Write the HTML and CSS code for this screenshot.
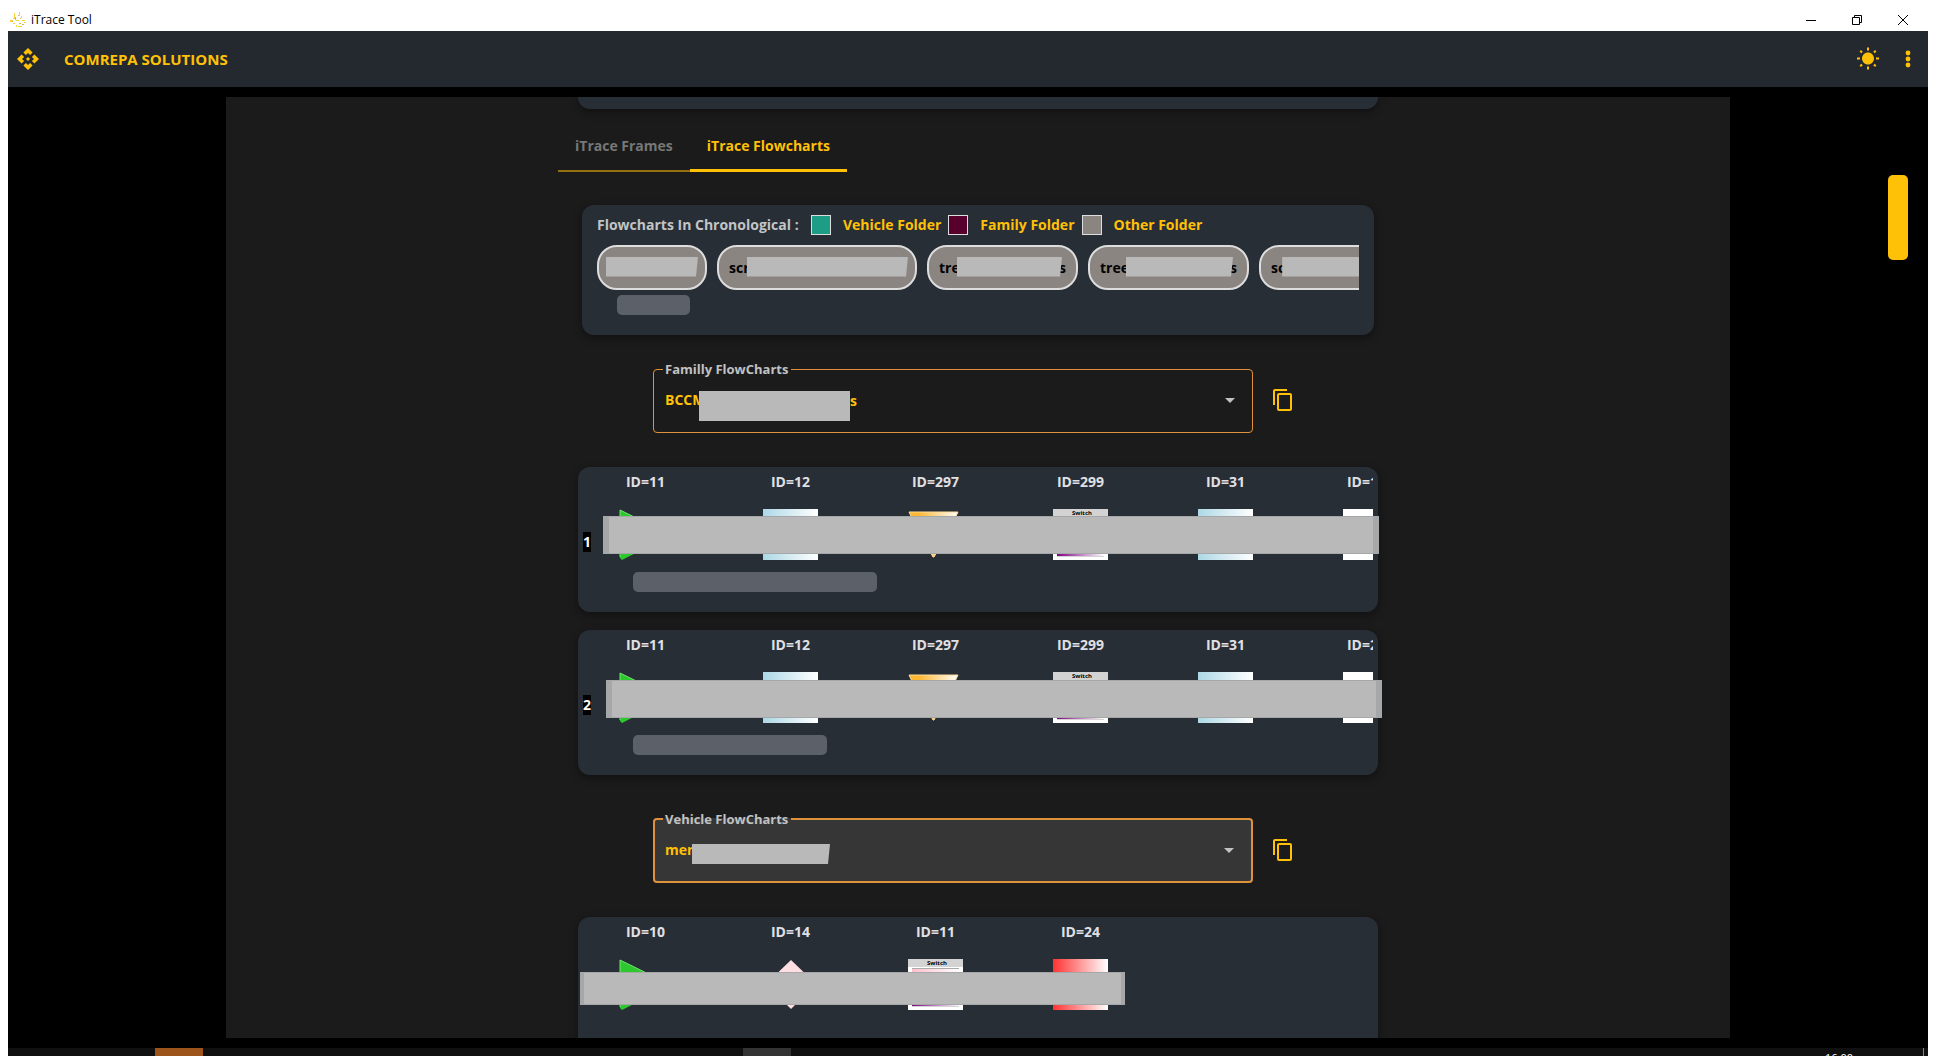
FILE: index.html
```html
<!DOCTYPE html>
<html lang="en">
<head>
<meta charset="utf-8">
<title>iTrace Tool</title>
<link rel="stylesheet" href="styles.css">
</head>
<body>
<svg class="defs" aria-hidden="true">
  <defs>
    <linearGradient id="g-blue"><stop offset="0" stop-color="#add8e6"/><stop offset="1" stop-color="#fff"/></linearGradient>
    <linearGradient id="g-red"><stop offset="0" stop-color="#ff3333"/><stop offset="1" stop-color="#fff"/></linearGradient>
    <linearGradient id="g-orange"><stop offset="0.2" stop-color="#ffb732"/><stop offset="1" stop-color="#fff"/></linearGradient>
    <linearGradient id="g-pink"><stop offset="0" stop-color="#ffc0cb"/><stop offset="1" stop-color="#fff"/></linearGradient>
    <linearGradient id="g-purple"><stop offset="0" stop-color="#800080"/><stop offset="1" stop-color="#fff"/></linearGradient>
    <symbol id="start" viewBox="0 0 55 51"><path d="M2 1 53 26 4 51 2 49Z" fill="#2dc82d"/><path d="M2 48V1L53 26" fill="none" stroke="#6fe86f"/></symbol>
    <symbol id="step" viewBox="0 0 55 51"><path d="M0 0h55v51H0z" fill="url(#g-blue)"/></symbol>
    <symbol id="end" viewBox="0 0 55 51"><path d="M0 0h55v51H0z" fill="url(#g-red)"/></symbol>
    <symbol id="blank" viewBox="0 0 55 51"><path d="M0 0h55v51H0z" fill="#fff"/></symbol>
    <symbol id="prep" viewBox="0 0 55 51"><path d="M1 3h49L41 22 26 48h-1L10 22Z" fill="url(#g-orange)" stroke="#ffdb9a"/></symbol>
    <symbol id="decision" viewBox="0 0 55 51"><path d="M28 1 53 25 28 50 3 25Z" fill="#ffdfe4"/></symbol>
    <symbol id="switch" viewBox="0 0 55 51"><path d="M0 0h55v51H0z" fill="#fff"/><path d="M0 0h55v8H0z" fill="#d3d3d3"/><path d="M4 9h47v1H4z" fill="#aaa"/><path d="M4 10h47v12H4z" fill="url(#g-pink)"/><path d="M4 34h47v13H4z" fill="url(#g-purple)"/><path d="M4 47h47v1H4z" fill="#d3d3d3"/><text x="29" y="6" text-anchor="middle" class="switch-text">Switch</text></symbol>
    <symbol id="copy" viewBox="0 0 24 24"><path d="M16 1H4c-1.1 0-2 .9-2 2v14h2V3h12V1zm3 4H8c-1.1 0-2 .9-2 2v14c0 1.1.9 2 2 2h11c1.1 0 2-.9 2-2V7c0-1.1-.9-2-2-2zm0 16H8V7h11v14z" fill="currentColor"/></symbol>
  </defs>
</svg>
<div class="window">
  <div class="titlebar">
    <svg class="app-icon" viewBox="0 0 16 16"><g fill="#f2d43c"><path d="M4 1h1v5H4zM9 0h1v4H9zM0 8h3v2H0zM3 6h2v1H3zM6 8h3v1H6zM11 4h1v2h-1zM12 8h3v1h-3zM14 10h2v1h-2zM6 13h1v2H6zM8 14h4v1H8zM3 11h2v1H3z"/></g><g fill="#e2b04a"><path d="M5 5h1v3H5zM10 6h1v1h-1zM9 11h2v1H9zM12 12h2v1h-2zM2 9h1v1H2zM8 3h1v1H8z"/></g></svg>
    <span class="window-title">iTrace Tool</span>
    <div class="window-buttons">
      <button aria-label="Minimize"><svg viewBox="0 0 10 10"><path d="M0 5.5h10"/></svg></button>
      <button aria-label="Restore"><svg viewBox="0 0 10 10"><path d="M.5 2.500h7v7h-7zM2.500 2V.5h7v7H8"/></svg></button>
      <button aria-label="Close"><svg viewBox="0 0 10 10"><path d="M0 0l10 10M10 0L0 10"/></svg></button>
    </div>
  </div>
  <header class="appbar">
    <svg class="icon" viewBox="0 0 24 24"><path fill="currentColor" d="M14 12l-2 2-2-2 2-2 2 2zm-2-6l2.120 2.120 2.500-2.500L12 1 7.380 5.620l2.500 2.500L12 6zm-6 6l2.120-2.120-2.500-2.500L1 12l4.620 4.620 2.500-2.500L6 12zm12 0l-2.120 2.120 2.500 2.500L23 12l-4.620-4.620-2.500 2.500L18 12zm-6 6l-2.120-2.120-2.500 2.500L12 23l4.620-4.620-2.500-2.500L12 18z"/></svg>
    <h1>COMREPA SOLUTIONS</h1>
    <button class="icon-button" aria-label="Toggle theme"><svg class="icon" viewBox="0 0 24 24"><path fill="currentColor" d="m6.760 4.840-1.800-1.790-1.410 1.410 1.790 1.790 1.420-1.410zM4 10.500H1v2h3v-2zm9-9.950h-2V3.500h2V.55zm7.450 3.910-1.410-1.410-1.790 1.790 1.410 1.410 1.790-1.790zm-3.210 13.700 1.790 1.800 1.410-1.410-1.800-1.790-1.400 1.400zM20 10.500v2h3v-2h-3zm-8-5c-3.310 0-6 2.690-6 6s2.690 6 6 6 6-2.690 6-6-2.690-6-6-6zm-1 16.950h2V19.500h-2v2.950zm-7.450-3.910 1.410 1.410 1.790-1.800-1.410-1.410-1.790 1.800z"/></svg></button>
    <button class="icon-button" aria-label="More"><svg class="icon" viewBox="0 0 24 24"><g fill="currentColor"><circle cx="12" cy="6" r="2.400"/><circle cx="12" cy="12" r="2.400"/><circle cx="12" cy="18" r="2.400"/></g></svg></button>
  </header>
  <div class="stage">
    <main class="panel">
      <div class="card card-tail"></div>
      <nav class="tabs" role="tablist">
        <button class="tab" role="tab">iTrace Frames</button>
        <button class="tab active" role="tab" aria-selected="true">iTrace Flowcharts</button>
      </nav>
      <section class="card timeline">
        <div class="key">
          <span class="key-title">Flowcharts In Chronological :</span>
          <span class="swatch vehicle"></span><span class="key-name">Vehicle Folder</span>
          <span class="swatch family"></span><span class="key-name">Family Folder</span>
          <span class="swatch other"></span><span class="key-name">Other Folder</span>
        </div>
        <div class="chips">
          <button class="chip" style="width:110px" aria-label="Flowchart 1"><span class="mask"></span></button>
          <button class="chip" style="width:200px">scr<span class="mask"></span></button>
          <button class="chip" style="width:151px">tre<span class="mask"></span>s</button>
          <button class="chip" style="width:161px">tree<span class="mask"></span>s</button>
          <button class="chip" style="width:150px">sc<span class="mask"></span></button>
        </div>
        <div class="thumb" style="width:73px"></div>
      </section>

      <div class="picker">
        <fieldset>
          <legend><label for="family">Familly FlowCharts</label></legend>
          <select id="family"><option>BCCM</option></select>
          <span class="cover cover-family"></span><span class="cover-end">s</span>
        </fieldset>
        <button class="icon-button" aria-label="Copy"><svg class="icon"><use href="#copy"/></svg></button>
      </div>

      <section class="lanes">
        <article class="card lane">
          <div class="steps">
            <div class="node">ID=11<svg><use href="#start"/></svg></div>
            <div class="node">ID=12<svg><use href="#step"/></svg></div>
            <div class="node">ID=297<svg><use href="#prep"/></svg></div>
            <div class="node">ID=299<svg><use href="#switch"/></svg></div>
            <div class="node">ID=31<svg><use href="#step"/></svg></div>
            <div class="node">ID=100<svg><use href="#blank"/></svg></div>
          </div>
          <span class="number">1</span>
          <div class="bar bar-first"></div>
          <div class="thumb" style="width:244px"></div>
        </article>
        <article class="card lane">
          <div class="steps">
            <div class="node">ID=11<svg><use href="#start"/></svg></div>
            <div class="node">ID=12<svg><use href="#step"/></svg></div>
            <div class="node">ID=297<svg><use href="#prep"/></svg></div>
            <div class="node">ID=299<svg><use href="#switch"/></svg></div>
            <div class="node">ID=31<svg><use href="#step"/></svg></div>
            <div class="node">ID=200<svg><use href="#blank"/></svg></div>
          </div>
          <span class="number">2</span>
          <div class="bar bar-second"></div>
          <div class="thumb" style="width:194px"></div>
        </article>
      </section>

      <div class="picker focused">
        <fieldset>
          <legend><label for="vehicle">Vehicle FlowCharts</label></legend>
          <select id="vehicle"><option>men</option></select>
          <span class="cover cover-vehicle"></span>
        </fieldset>
        <button class="icon-button" aria-label="Copy"><svg class="icon"><use href="#copy"/></svg></button>
      </div>

      <section class="lanes">
        <article class="card lane">
          <div class="steps">
            <div class="node">ID=10<svg><use href="#start"/></svg></div>
            <div class="node">ID=14<svg><use href="#decision"/></svg></div>
            <div class="node">ID=11<svg><use href="#switch"/></svg></div>
            <div class="node">ID=24<svg><use href="#end"/></svg></div>
          </div>
          <div class="bar bar-third"></div>
        </article>
      </section>
    </main>
    <div class="page-thumb"></div>
  </div>
  <footer class="taskbar">
    <span class="task running"></span>
    <span class="task current"></span>
    <span class="clock">16:00</span>
  </footer>
</div>
</body>
</html>
```
FILE: styles.css
```css
* { box-sizing: border-box; }

body {
  margin: 0;
  background: #fff;
  font-family: "Open Sans", "Noto Sans", sans-serif;
  font-size: 14px;
  font-weight: 700;
  line-height: 20px;
}

button {
  border: 0;
  padding: 0;
  background: none;
  color: inherit;
  font: inherit;
}

.defs { position: absolute; width: 0; height: 0; }

.switch-text { font: 700 6px "Open Sans", sans-serif; fill: #000; }

.window {
  display: flex;
  flex-direction: column;
  height: 100vh;
  padding: 0 8px;
  overflow: hidden;
}

.titlebar {
  display: flex;
  align-items: center;
  height: 31px;
  flex: none;
  padding: 8px 0 0 2px;
  color: #000;
  font-size: 12px;
  font-weight: 400;
}
.app-icon { width: 16px; height: 16px; margin-right: 5px; }
.window-buttons { display: flex; margin-left: auto; }
.window-buttons button { width: 45px; height: 20px; margin-right: 1px; }
.window-buttons button:last-child { margin-right: 3px; }
.window-buttons svg {
  display: block;
  width: 10px;
  height: 10px;
  margin: auto;
  fill: none;
  stroke: #000;
}

.appbar {
  display: flex;
  align-items: center;
  flex: none;
  height: 56px;
  padding: 0 8px;
  background: #24292f;
  color: #ffc107;
}
.appbar h1 { flex: 1; margin: 0 0 0 24px; font-size: 15px; line-height: 24px; }
.icon { display: block; width: 24px; height: 24px; margin: auto; }
.icon-button { width: 40px; height: 40px; flex: none; color: #ffc107; }
.appbar .icon-button:last-child { margin-right: -8px; }

.stage {
  display: grid;
  grid-template-columns: 218px minmax(0, 1fr) 198px;
  flex: 1;
  min-height: 0;
  padding: 10px 0;
  background: #000;
}
.panel {
  grid-column: 2;
  overflow: hidden;
  background: #1b1b1b;
}
.page-thumb {
  justify-self: end;
  width: 20px;
  height: 85px;
  margin: 78px 20px 0 0;
  border-radius: 5px;
  background: #ffc107;
}

.card {
  width: 800px;
  margin: 0 auto;
  border-radius: 12px;
  background: #282e36;
  box-shadow: 0 3px 8px rgba(0, 0, 0, .4);
}
.card-tail { height: 12px; border-radius: 0 0 12px 12px; }

.tabs { display: flex; width: 840px; margin: 15px auto 33px; }
.tab {
  height: 48px;
  padding: 0 17px 2px;
  border-bottom: 2px solid #93700d;
  color: #777;
}
.tab.active { border-bottom: 3px solid #ffc107; color: #ffc107; }

.timeline {
  width: 792px;
  height: 130px;
  margin-bottom: 26px;
  padding: 10px 15px;
}
.key { display: flex; align-items: center; }
.key-title { width: 214px; color: #c2c4c6; }
.key-name { margin: 0 7px 0 12px; color: #ffc107; }
.swatch { width: 20px; height: 20px; border: 1px solid #ddd; }
.vehicle { background: #1d9c86; }
.family { background: #57002d; }
.other { background: #8b8582; }

.chips { display: flex; gap: 10px; margin: 10px 0 5px; overflow: hidden; }
.chip {
  display: flex;
  align-items: center;
  flex: none;
  height: 45px;
  padding: 0 10px;
  border: 2px solid #ddd;
  border-radius: 20px;
  background: #8b8582;
  color: #000;
}
.mask {
  flex: 1;
  height: 20px;
  margin: 0 -3px 2px;
  background: #b9b9b9;
  clip-path: polygon(0 0, 100% 0, calc(100% - 2px) 100%, 0 100%);
}
.thumb { height: 20px; margin-left: 20px; border-radius: 5px; background: #5c6068; }

.picker {
  display: flex;
  align-items: center;
  justify-content: center;
  gap: 10px;
  margin-bottom: 34px;
}
.picker .icon-button { margin-top: 6px; }
fieldset {
  position: relative;
  width: 600px;
  height: 72px;
  margin: 0;
  padding: 0 9px;
  border: 1px solid #e0913c;
  border-radius: 4px;
}
legend { padding: 0 2px; color: #c2c2c2; font-size: 13px; line-height: 16px; }
legend label { display: block; width: 124px; white-space: nowrap; }
select {
  display: block;
  width: 100%;
  height: 46px;
  padding: 0 2px;
  border: 0;
  outline: 0;
  appearance: none;
  background: transparent;
  color: #ffc107;
  font: inherit;
}
fieldset::after {
  content: "";
  position: absolute;
  right: 17px;
  top: 21px;
  border: 5px solid transparent;
  border-top-color: #c2c2c2;
  border-bottom: 0;
}
.focused fieldset { border-width: 2px; background: #363636; padding: 0 8px; }

.cover { position: absolute; background: #b9b9b9; }
.cover-family { left: 45px; top: 14px; width: 151px; height: 30px; }
.cover-end { position: absolute; left: 196px; top: 14px; color: #ffc107; }
.cover-vehicle {
  left: 37px;
  top: 17px;
  width: 138px;
  height: 20px;
  clip-path: polygon(0 0, 100% 0, calc(100% - 2px) 100%, 0 100%);
}

.lanes { display: flex; flex-direction: column; gap: 18px; margin-bottom: 36px; }
.lane { position: relative; height: 145px; padding: 5px 5px 0; }
.steps { display: flex; gap: 90px; padding-left: 35px; overflow: hidden; }
.node {
  display: flex;
  flex: none;
  flex-direction: column;
  align-items: center;
  gap: 17px;
  width: 55px;
  color: #e0e0e4;
}
.node svg { display: block; width: 55px; height: 51px; }
.number {
  position: absolute;
  left: 5px;
  top: 65px;
  background: #000;
  color: #fff;
}
.lane .thumb { margin: 12px 0 0 50px; }
.bar {
  position: absolute;
  height: 38px;
  border: solid #a6a7a8;
  border-width: 1px 6px;
  background: #b9b9b9;
}
.bar-first { left: 25px; top: 49px; width: 776px; }
.bar-second { left: 28px; top: 50px; width: 776px; }
.bar-third { left: 2px; top: 55px; width: 545px; height: 33px; border-width: 1px 4px; }

.taskbar {
  display: flex;
  flex: none;
  height: 8px;
  overflow: hidden;
  background: #101010;
}
.task { width: 48px; height: 8px; }
.running { margin-left: 147px; background: #9c541b; }
.current { margin-left: 540px; background: #333; }
.clock {
  height: 16px;
  margin-left: auto;
  padding: 4px 70px 0 0;
  margin-right: 4px;
  border-right: 1px solid #888;
  color: #fff;
  font-size: 11px;
  font-weight: 400;
  line-height: 12px;
}
```
